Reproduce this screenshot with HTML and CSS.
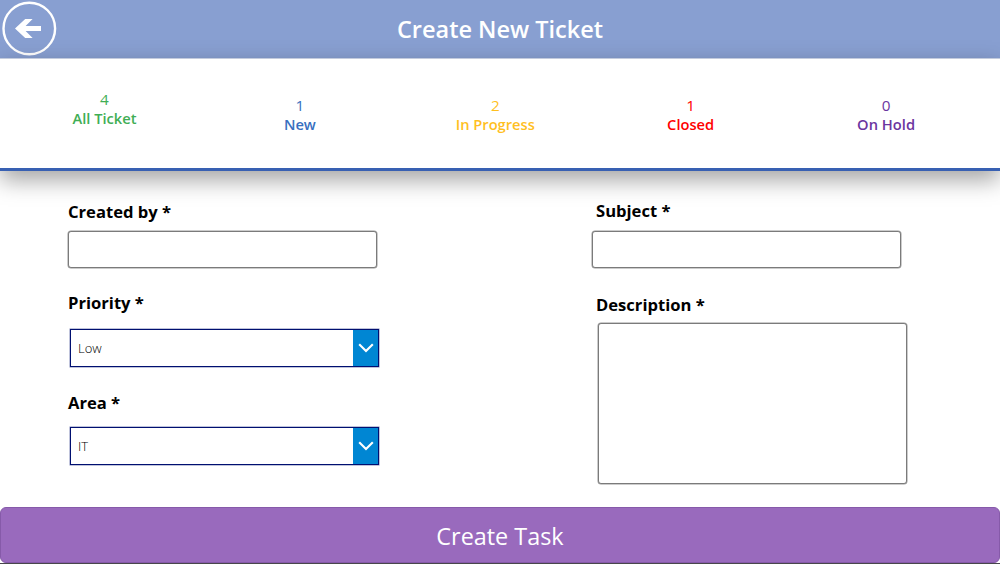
FILE: index.html
```html
<!DOCTYPE html>
<html lang="en">
<head>
<meta charset="utf-8">
<title>Create New Ticket</title>
<link rel="stylesheet" href="styles.css">
</head>
<body>
<div class="app">
  <header class="header">
    <button class="back" type="button" aria-label="Back">
      <svg width="57" height="57" viewBox="0 0 57 57">
        <circle cx="29.3" cy="28.5" r="25.8" fill="none" stroke="#fff" stroke-width="2.4"/>
        <path d="M15 28.5 25.2 19h7.4l-7 7.1H41v4.8H25.6l7 7.1h-7.4z" fill="#fff"/>
      </svg>
    </button>
    <h1 class="title">Create New Ticket</h1>
  </header>
  <nav class="stats">
    <div class="stat stat-all"><span class="count">4</span><span>All Ticket</span></div>
    <div class="stat stat-new"><span class="count">1</span><span>New</span></div>
    <div class="stat stat-progress"><span class="count">2</span><span>In Progress</span></div>
    <div class="stat stat-closed"><span class="count">1</span><span>Closed</span></div>
    <div class="stat stat-hold"><span class="count">0</span><span>On Hold</span></div>
  </nav>
  <form class="form">
    <div class="column column-left">
      <label class="label" for="creator">Created by *</label>
      <input class="input" id="creator" type="text">
      <span class="label label-priority">Priority *</span>
      <div class="select" role="combobox" aria-label="Priority">
        <span class="value">Low</span>
        <span class="arrow"><svg width="16" height="10" viewBox="0 0 16 10"><path d="M1.2 1.3 8 8.1l6.8-6.8" fill="none" stroke="#fff" stroke-width="2.1"/></svg></span>
      </div>
      <span class="label label-area">Area *</span>
      <div class="select select-area" role="combobox" aria-label="Area">
        <span class="value">IT</span>
        <span class="arrow"><svg width="16" height="10" viewBox="0 0 16 10"><path d="M1.2 1.3 8 8.1l6.8-6.8" fill="none" stroke="#fff" stroke-width="2.1"/></svg></span>
      </div>
    </div>
    <div class="column column-right">
      <label class="label label-subject" for="subject">Subject *</label>
      <input class="input" id="subject" type="text">
      <label class="label label-description" for="description">Description *</label>
      <textarea class="input textarea" id="description"></textarea>
    </div>
  </form>
  <button class="submit" type="button">Create Task</button>
</div>
</body>
</html>
```

FILE: styles.css
```css
* { box-sizing: border-box; }
body {
  margin: 0;
  background: #fff;
  font-family: "Open Sans", sans-serif;
}
.app {
  display: flex;
  flex-direction: column;
  width: 1000px;
  height: 564px;
  overflow: hidden;
  border-bottom: 1px solid #48464c;
}
.header {
  display: grid;
  grid-template-columns: 57px 1fr 57px;
  flex: none;
  height: 58px;
  background: #889fd1;
}
.back {
  width: 57px;
  height: 57px;
  padding: 0;
  border: 0;
  background: none;
}
.back svg { display: block; }
.title {
  margin: 0;
  color: #fff;
  font-size: 23.5px;
  font-weight: 600;
  line-height: 58px;
  text-align: center;
}
.stats {
  display: grid;
  grid-template-columns: repeat(5, 195.4px);
  flex: none;
  height: 113px;
  padding: 37px 0 0 6.8px;
  background: #fff;
  border-top: 1px solid #c3cbdd;
  border-bottom: 3px solid #3860b2;
  box-shadow: 0 9px 22px rgba(0, 0, 0, 0.36);
}
.stat {
  display: flex;
  flex-direction: column;
  align-items: center;
  font-size: 14.7px;
  font-weight: 600;
  line-height: 19px;
  white-space: nowrap;
}
.count {
  font-size: 15.3px;
  font-weight: 400;
}
.stat-all { color: #3fae55; margin-top: -6px; }
.stat-new { color: #386fc0; }
.stat-progress { color: #ffbf1f; }
.stat-closed { color: #ff0000; }
.stat-hold { color: #6a35a0; }
.form {
  display: grid;
  grid-template-columns: 524px 1fr;
  flex: none;
  height: 336px;
  padding-left: 68px;
}
.column {
  display: flex;
  flex-direction: column;
  align-items: flex-start;
}
.column-left { padding-top: 30px; }
.column-right { padding-top: 29px; }
.label {
  color: #000;
  font-size: 16.6px;
  font-weight: 700;
  line-height: 22px;
}
.input {
  display: block;
  width: 309px;
  height: 37px;
  margin: 8px 0 0;
  padding: 4px 8px;
  border: 1px solid #7b7b7b;
  border-radius: 3px;
  box-shadow: 0 0 0 0.5px #9a9a9a;
  background: #fff;
  font: inherit;
  outline: none;
  resize: none;
}
.column-left .input { margin-left: 0.4px; }
.label-priority { margin-top: 24px; }
.label-area { margin-top: 25px; }
.label-subject { margin: 0 0 1px 4px; }
.label-description { margin: 26px 0 0 4px; }
.textarea {
  height: 161px;
  margin: 7px 0 0 6.4px;
}
.select {
  display: flex;
  width: 309px;
  height: 38px;
  margin: 15px 0 0 2px;
  border: 1px solid #000f70;
  box-shadow: 0 0 0 0.5px #8087b8;
  background: #fff;
}
.select-area { margin-top: 13px; }
.value {
  flex: 1;
  padding-left: 7px;
  color: #000;
  font-size: 13px;
  font-weight: 300;
  line-height: 36px;
}
.arrow {
  display: flex;
  align-items: center;
  justify-content: center;
  width: 25px;
  background: #0086d3;
}
.submit {
  flex: none;
  height: 56px;
  padding: 0;
  border: 1px solid #865aa9;
  border-radius: 6px;
  background: #996abd;
  color: #fff;
  font-family: inherit;
  font-size: 23.4px;
  font-weight: 400;
  line-height: 56px;
}
```
